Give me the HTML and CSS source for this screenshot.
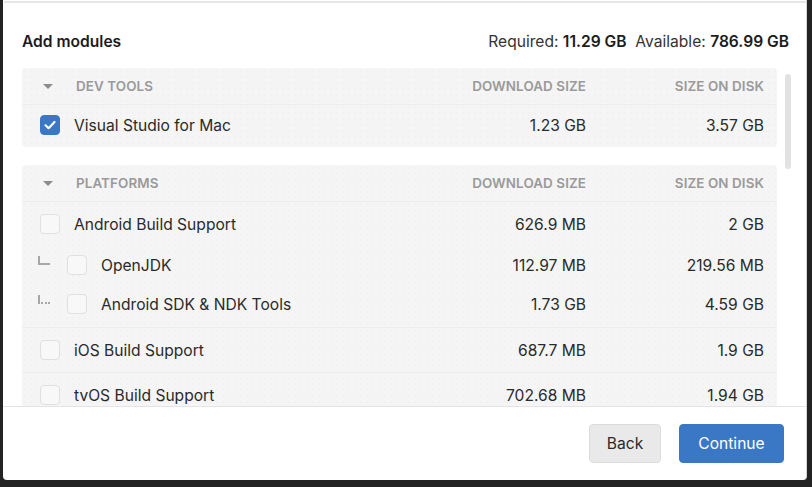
FILE: index.html
```html
<!DOCTYPE html>
<html>
<head>
<meta charset="utf-8">
<link rel="stylesheet" href="styles.css">
</head>
<body>
<div class="dialog">
  <div class="topline"></div>
  <div class="header">
    <div class="title">Add modules</div>
    <div class="space">Required: <b>11.29 GB</b>&nbsp; Available: <b>786.99 GB</b></div>
  </div>
  <div class="list">
    <div class="scroll">
      <div class="group">
        <div class="ghead">
          <div class="gname"><span class="caret"></span>DEV TOOLS</div>
          <div class="num">DOWNLOAD SIZE</div>
          <div class="num">SIZE ON DISK</div>
        </div>
        <div class="row r-vs">
          <div class="name"><span class="cb checked"><svg viewBox="0 0 20 20" width="20" height="20"><path d="M5.5 10.3 L8.6 13.2 L14.5 7" fill="none" stroke="#fff" stroke-width="2.2" stroke-linecap="round" stroke-linejoin="round"/></svg></span>Visual Studio for Mac</div>
          <div class="num">1.23 GB</div>
          <div class="num">3.57 GB</div>
        </div>
      </div>
      <div class="group">
        <div class="ghead">
          <div class="gname"><span class="caret"></span>PLATFORMS</div>
          <div class="num">DOWNLOAD SIZE</div>
          <div class="num">SIZE ON DISK</div>
        </div>
        <div class="row r-android">
          <div class="name"><span class="cb"></span>Android Build Support</div>
          <div class="num">626.9 MB</div>
          <div class="num">2 GB</div>
        </div>
        <div class="row child r-jdk">
          <div class="name"><span class="conn"></span><span class="cb"></span>OpenJDK</div>
          <div class="num">112.97 MB</div>
          <div class="num">219.56 MB</div>
        </div>
        <div class="row child r-sdk">
          <div class="name"><span class="conn dotted"></span><span class="cb"></span>Android SDK &amp; NDK Tools</div>
          <div class="num">1.73 GB</div>
          <div class="num">4.59 GB</div>
        </div>
        <div class="row r-ios">
          <div class="name"><span class="cb"></span>iOS Build Support</div>
          <div class="num">687.7 MB</div>
          <div class="num">1.9 GB</div>
        </div>
        <div class="row r-tvos">
          <div class="name"><span class="cb"></span>tvOS Build Support</div>
          <div class="num">702.68 MB</div>
          <div class="num">1.94 GB</div>
        </div>
      </div>
    </div>
    <div class="scrollbar"></div>
  </div>
  <div class="footer">
    <button class="btn back">Back</button>
    <button class="btn primary">Continue</button>
  </div>
</div>
</body>
</html>
```
FILE: styles.css
```css
* { box-sizing: border-box; }
html, body { margin: 0; padding: 0; }
body {
  background: #232323;
  width: 812px;
  height: 487px;
  overflow: hidden;
  padding-left: 3px;
  font-family: Inter, "Noto Sans", sans-serif;
  color: #222;
}
.dialog {
  width: 804px;
  height: 480px;
  background: #fff;
  border-radius: 0 0 4px 4px;
  border-right: 1px solid #d6d6d6;
  display: flex;
  flex-direction: column;
  overflow: hidden;
}
.topline {
  margin-top: 1px;
  height: 2px;
  background: #e6e6e6;
  margin-left: 1px;
}
.header {
  margin-top: 27px;
  height: 22px;
  padding: 0 17px 0 19px;
  display: flex;
  justify-content: space-between;
  align-items: center;
  font-size: 15.6px;
}
.title { font-weight: 600; color: #1c1c1c; }
.space { color: #333; }
.space b { font-weight: 600; color: #1c1c1c; }
.list {
  margin-top: 16px;
  height: 339px;
  position: relative;
  overflow: hidden;
  border-bottom: 1px solid #e4e4e4;
}
.scroll {
  padding-left: 19px;
  width: 774px;
}
.group {
  background-color: #f5f5f5;
  background-image: radial-gradient(circle, #ececec 0.6px, transparent 0.8px);
  background-size: 6px 6px;
  border-radius: 4px;
  margin-bottom: 18px;
}
.ghead, .row {
  display: grid;
  grid-template-columns: 1fr 160px 178px;
  padding-right: 13px;
  align-items: center;
}
.ghead {
  height: 37px;
  font-size: 13.4px;
  font-weight: 600;
  color: #9a9a9a;
  letter-spacing: 0.1px;
  border-bottom: 1px solid #ededed;
}
.gname {
  display: flex;
  align-items: center;
  padding-left: 21px;
}
.caret {
  width: 0;
  height: 0;
  border-left: 5px solid transparent;
  border-right: 5px solid transparent;
  border-top: 5px solid #8c8c8c;
  margin-right: 23px;
}
.num { text-align: right; }
.row {
  height: 42px;
  font-size: 15.6px;
  color: #2a2a2a;
}
.r-vs { padding-bottom: 2px; }
.name {
  display: flex;
  align-items: center;
  padding-left: 18px;
}
.cb {
  width: 20px;
  height: 20px;
  border-radius: 4px;
  border: 1.5px solid #e0e0e0;
  background: #f8f8f8;
  margin-right: 14px;
  flex: none;
  display: flex;
}
.cb.checked {
  background: #3a78c6;
  border-color: #3a78c6;
}
.cb.checked svg { margin: -1.5px; }
.r-android { height: 44px; }
.r-jdk { height: 38px; }
.r-sdk { height: 44px; padding-bottom: 3px; border-bottom: 1px solid #ededed; }
.r-ios { height: 45px; border-bottom: 1px solid #ededed; }
.r-tvos { height: 44px; }
.child .name { padding-left: 16px; }
.conn {
  width: 12px;
  height: 9px;
  border-left: 2px solid #a8a8a8;
  border-bottom: 2px solid #a8a8a8;
  margin-top: -9px;
  margin-right: 17px;
  flex: none;
}
.conn.dotted {
  border-bottom: 2px dotted #a8a8a8;
}
.scrollbar {
  position: absolute;
  left: 782px;
  top: 6px;
  width: 6px;
  height: 95px;
  border-radius: 3px;
  background: #e2e2e2;
}
.footer {
  flex: 1;
  display: flex;
  justify-content: flex-end;
  align-items: center;
  gap: 18px;
  padding-right: 22px;
}
.btn {
  font-family: Inter, "Noto Sans", sans-serif;
  font-size: 15.6px;
  height: 39px;
  border-radius: 4px;
  cursor: pointer;
}
.back {
  width: 72px;
  background: #e9e9e9;
  border: 1px solid #dcdcdc;
  color: #2a2a2a;
}
.primary {
  width: 105px;
  background: #3a78c6;
  border: 1px solid #3a78c6;
  color: #fff;
}
```
